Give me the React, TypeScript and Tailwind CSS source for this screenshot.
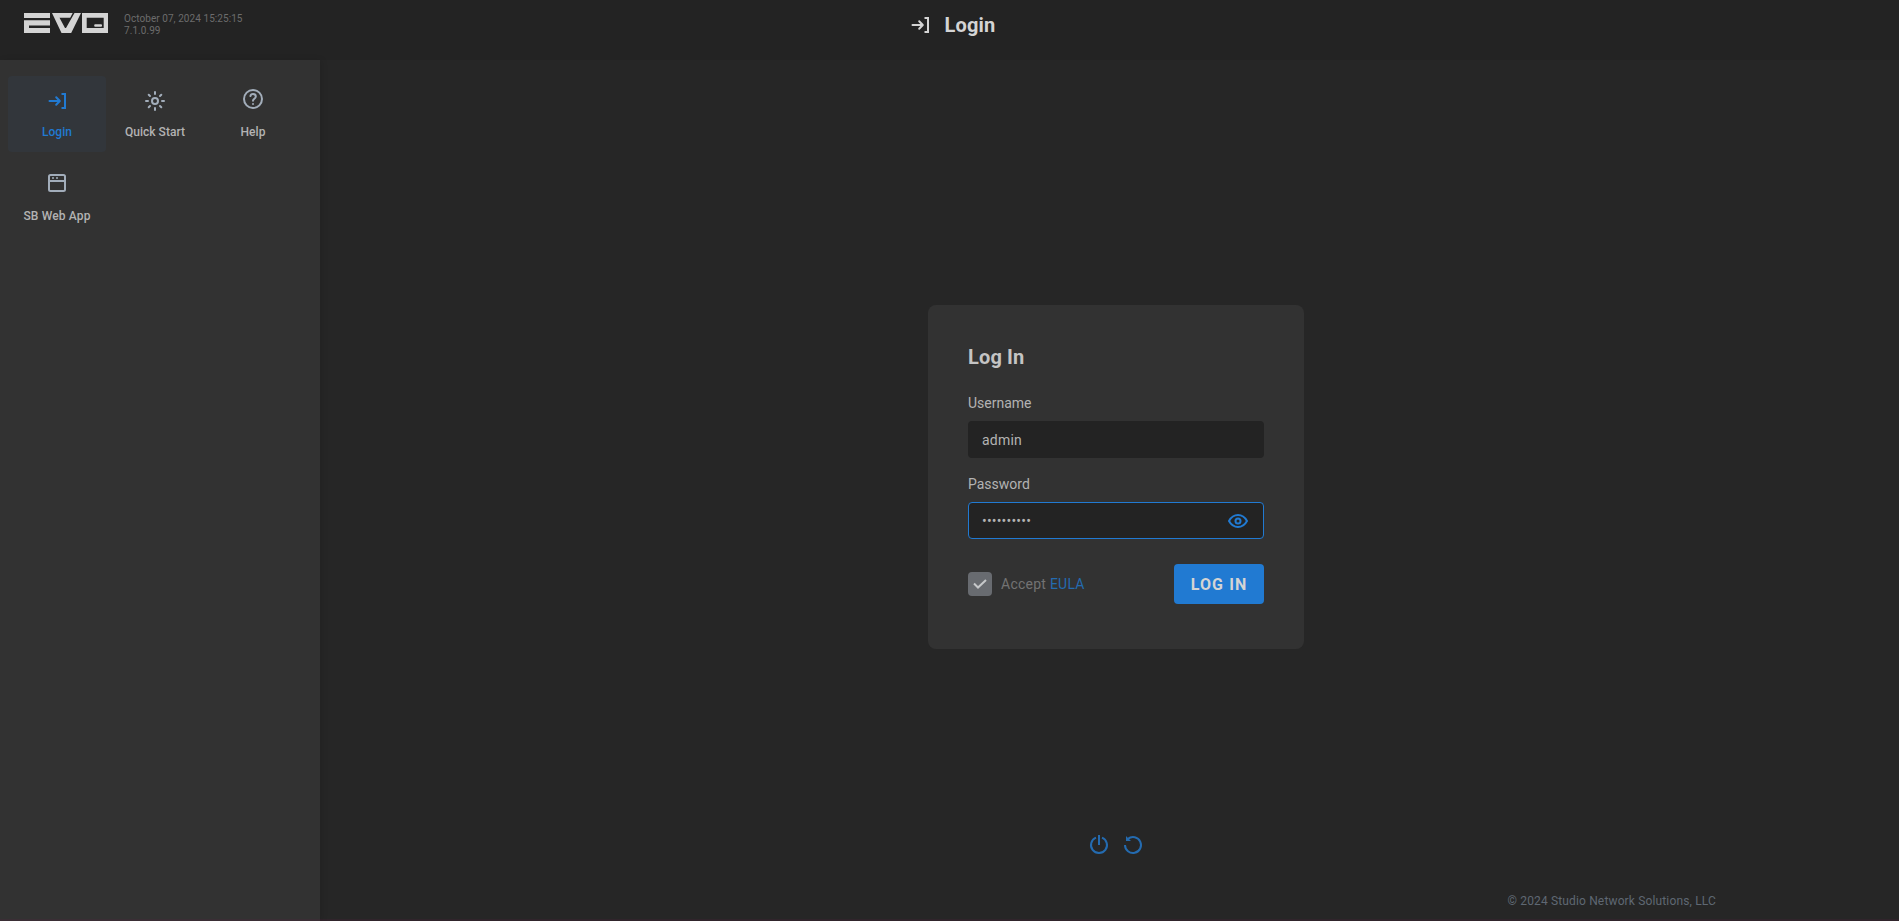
import React from "react";

function LoginIcon() {
  return (
    <svg width="18" height="18" viewBox="0 0 18 18" fill="none" stroke="currentColor" strokeWidth="2" strokeLinecap="round" strokeLinejoin="round">
      <path d="M1.500 9H11.600M8.200 5.200L11.800 9l-3.600 3.800" />
      <path d="M13.500 2H17v14h-3.500" strokeLinejoin="miter" strokeLinecap="butt" />
    </svg>
  );
}

function SunIcon() {
  return (
    <svg width="20" height="20" viewBox="0 0 20 20" fill="none" stroke="currentColor" strokeWidth="2" strokeLinecap="round">
      <circle cx="10" cy="10" r="3" />
      <path d="M10 1v2M10 17v2M1 10h2M17 10h2M3.700 3.700l1.300 1.300M15 15l1.300 1.300M3.700 16.300L5 15M15 5l1.300-1.300" />
    </svg>
  );
}

function HelpIcon() {
  return (
    <svg width="20" height="20" viewBox="0 0 20 20" fill="none" stroke="currentColor" strokeWidth="2" strokeLinecap="round">
      <circle cx="10" cy="10" r="9" />
      <path d="M7.400 7.100C7.600 5.800 8.700 5 10 5c1.600 0 2.800 1.100 2.800 2.600 0 2.200-2.800 2.100-2.800 4.200" />
      <circle cx="10" cy="15" r="1" fill="currentColor" stroke="none" />
    </svg>
  );
}

function WindowIcon() {
  return (
    <svg width="18" height="18" viewBox="0 0 18 18" fill="none" stroke="currentColor" strokeWidth="2">
      <rect x="1" y="1" width="16" height="16" rx="1.500" />
      <path d="M1 7h16" />
      <path d="M4 4h2M8 4h2" opacity=".75" />
    </svg>
  );
}

function EyeIcon() {
  return (
    <svg width="20" height="14" viewBox="0 0 20 14" fill="none" stroke="currentColor" strokeWidth="2">
      <path d="M1 7c2.200-4 5.200-6 9-6s6.800 2 9 6c-2.200 4-5.200 6-9 6S3.200 11 1 7z" strokeLinejoin="round" />
      <circle cx="10" cy="7" r="2.500" />
    </svg>
  );
}

function PowerIcon() {
  return (
    <svg width="20" height="20" viewBox="0 0 20 20" fill="none" stroke="currentColor" strokeWidth="2">
      <path d="M7 2.600a8 8 0 1 0 6 0M10 0v10" />
    </svg>
  );
}

function RestartIcon() {
  return (
    <svg width="20" height="20" viewBox="0 0 20 20" fill="none" stroke="currentColor" strokeWidth="2">
      <path d="M2 10a8 8 0 1 0 3-6.200" />
      <path d="M3 1l1.700 1.700L8 6H3z" fill="currentColor" stroke="none" />
    </svg>
  );
}

function Logo() {
  return (
    <svg width="84" height="20" viewBox="0 0 84 20" fill="#d4d4d4">
      <path d="M0 0h26v5H0zM0 7.300h26v5.200H5V15h21v5H0z" />
      <path d="M28 0H48.700L46.200 4.800H35.500L41 15h1L50.500 0H57l-9.800 20H37.500z" />
      <path d="M58 0h26v20H58zm4.700 4.800v10.200h17V4.800z" fillRule="evenodd" />
      <rect x="70.200" y="11.200" width="7.800" height="2.600" rx="1" />
    </svg>
  );
}

const menu = [
  { label: "Login", icon: <LoginIcon />, pad: "pt-4", active: true },
  { label: "Quick Start", icon: <SunIcon />, pad: "pt-[15px]" },
  { label: "Help", icon: <HelpIcon />, pad: "pt-[13px]" },
  { label: "SB Web App", icon: <WindowIcon />, pad: "pt-[14px]", wide: true },
];

export default function App() {
  return (
    <div className="relative flex h-[921px] flex-col overflow-hidden bg-[#262626] font-['Roboto',sans-serif] text-[#b3b3b3]">
      <header className="grid h-[60px] shrink-0 grid-cols-[1fr_auto_1fr] bg-[#232323]">
        <div className="flex items-start pt-[13px] pl-6">
          <Logo />
          <div className="ml-4 text-[10px] leading-[12px] tracking-[0.06px] text-[#6c6c6c]">
            <p>October 07, 2024 15:25:15</p>
            <p>7.1.0.99</p>
          </div>
        </div>
        <div className="flex h-[50px] items-center gap-4 pl-[7px] text-[#d4d4d4]">
          <LoginIcon />
          <h1 className="text-[20px] leading-6 font-bold tracking-[0.15px]">Login</h1>
        </div>
      </header>
      <div className="flex min-h-0 flex-1">
        <aside className="z-10 w-80 shrink-0 bg-[#323232] px-2 pt-4 shadow-[2px_0_6px_rgba(0,0,0,0.1)]">
          <nav className="grid grid-cols-[98px_98px_98px] gap-y-2">
            {menu.map((m) => (
              <a
                key={m.label}
                className={
                  m.active
                    ? "flex h-[76px] flex-col items-center justify-between rounded bg-[#32363b] pb-[13px] text-[#217ad2] " + m.pad
                    : "flex h-[76px] flex-col items-center justify-between rounded pb-[13px] text-[#a2adba] " + m.pad
                }
              >
                {m.icon}
                <span
                  className={
                    "text-[12px] leading-[14px] font-medium " + (m.active ? "" : "text-[#b3b3b3] ") + (m.wide ? "tracking-[0.15px]" : "tracking-[0.03px]")
                  }
                >
                  {m.label}
                </span>
              </a>
            ))}
          </nav>
        </aside>
        <main className="flex flex-1 flex-col items-center pt-[245px] pl-[13px]">
          <section className="h-[344px] w-[376px] shrink-0 rounded-lg bg-[#323232] px-10 pt-10">
            <h2 className="text-[20px] leading-6 font-bold tracking-[0.15px] text-[#c4c4c4]">Log In</h2>
            <label className="mt-6 block text-[14px] leading-5">Username</label>
            <div className="mt-2 flex h-[37px] items-center rounded bg-[#232323] px-[14px] pt-px text-[14px] tracking-[0.2px]">admin</div>
            <label className="mt-4 block text-[14px] leading-5">Password</label>
            <div className="mt-2 flex h-[37px] items-center justify-between rounded border border-[#217ad2] bg-[#232323] pr-[15px] pl-[13px] text-[#217ad2]">
              <span className="text-[14px] leading-5 tracking-[0.18px] text-[#b3b3b3]">••••••••••</span>
              <EyeIcon />
            </div>
            <div className="mt-[25px] flex h-10 items-center">
              <span className="flex size-6 items-center justify-center rounded bg-[#686b70]">
                <svg width="14" height="10" viewBox="0 0 14 10" fill="none" stroke="#c6c8ca" strokeWidth="2">
                  <path d="M1 4.500L5 8.500L13 1" />
                </svg>
              </span>
              <span className="ml-[9px] text-[14px] tracking-[0.25px] text-[#737373]">
                Accept <a className="text-[#246bb0]">EULA</a>
              </span>
              <button className="ml-auto h-10 w-[90px] rounded bg-[#217ad2] pt-px text-[16px] font-bold tracking-[1.1px] text-[#d4d4d4]">LOG IN</button>
            </div>
          </section>
          <div className="mt-[186px] flex gap-[14px] text-[#246bb0]">
            <PowerIcon />
            <RestartIcon />
          </div>
          <footer className="mt-[38px] mr-[183px] self-end text-[12px] leading-4 tracking-[0.15px] text-[#5f6873]">© 2024 Studio Network Solutions, LLC</footer>
        </main>
      </div>
      <div className="absolute inset-x-0 bottom-0 z-20 h-[2px] bg-[#5a2040]/20" />
    </div>
  );
}
